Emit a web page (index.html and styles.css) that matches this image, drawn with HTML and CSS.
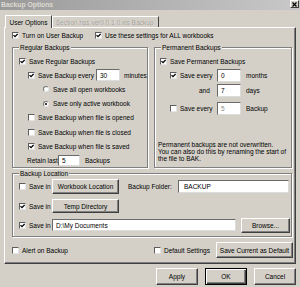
FILE: index.html
```html
<!DOCTYPE html>
<html>
<head>
<meta charset="utf-8">
<title>Backup Options</title>
<link rel="stylesheet" href="styles.css">
</head>
<body>
<div class="window">
  <div class="titlebar">
    <span class="title">Backup Options</span>
    <span class="close"><svg width="5" height="5" viewBox="0 0 5 5"><path d="M0.5 0.5 L4.5 4.5 M4.5 0.5 L0.5 4.5" stroke="#000" stroke-width="1.2"/></svg></span>
  </div>
  <div class="tabs">
    <div class="tab active">User Options</div>
    <div class="tab disabled">Section.hss.ver0.0.1.0.xls Backup</div>
  </div>
  <div class="panel">
    <div class="toprow">
      <div class="opt first"><span class="cb"><svg viewBox="0 0 5 5"><path d="M0.5 2.1 L2 3.6 L4.6 0.9"/></svg></span>Turn on User Backup</div>
      <div class="opt"><span class="cb"><svg viewBox="0 0 5 5"><path d="M0.5 2.1 L2 3.6 L4.6 0.9"/></svg></span>Use these settings for ALL workbooks</div>
    </div>
    <div class="groups">
      <div class="group regular">
        <span class="gtitle">Regular Backups</span>
        <div class="row"><span class="cb"><svg viewBox="0 0 5 5"><path d="M0.5 2.1 L2 3.6 L4.6 0.9"/></svg></span>Save Regular Backups</div>
        <div class="row i1"><span class="cb"><svg viewBox="0 0 5 5"><path d="M0.5 2.1 L2 3.6 L4.6 0.9"/></svg></span><span class="lbl every">Save Backup every</span><span class="input num">30</span><span class="unit">minutes</span></div>
        <div class="row i2"><span class="rb"></span>Save all open workbooks</div>
        <div class="row i2"><span class="rb on"></span>Save only active workbook</div>
        <div class="row i1"><span class="cb off"></span>Save Backup when file is opened</div>
        <div class="row i1"><span class="cb off"></span>Save Backup when file is closed</div>
        <div class="row i1"><span class="cb"><svg viewBox="0 0 5 5"><path d="M0.5 2.1 L2 3.6 L4.6 0.9"/></svg></span>Save Backup when file is saved</div>
        <div class="row retain"><span class="lbl retainlbl">Retain last</span><span class="input small">5</span><span class="unit">Backups</span></div>
      </div>
      <div class="group permanent">
        <span class="gtitle">Permanent Backups</span>
        <div class="prow"><span class="cb"><svg viewBox="0 0 5 5"><path d="M0.5 2.1 L2 3.6 L4.6 0.9"/></svg></span>Save Permanent Backups</div>
        <div class="prow p1"><span class="cb"><svg viewBox="0 0 5 5"><path d="M0.5 2.1 L2 3.6 L4.6 0.9"/></svg></span><span class="lbl plbl">Save every</span><span class="input pnum">0</span><span class="punit">months</span></div>
        <div class="prow p1 and"><span class="cbspace"></span><span class="lbl plbl andlbl">and</span><span class="input pnum">7</span><span class="punit">days</span></div>
        <div class="prow p1 last"><span class="cb off"></span><span class="lbl plbl">Save every</span><span class="input pnum dis">5</span><span class="punit">Backup</span></div>
        <p class="note">Permanent backups are not overwritten.<br>You can also do this by renaming the start of<br>the file to BAK.</p>
      </div>
    </div>
    <div class="group location">
      <span class="gtitle">Backup Location</span>
      <div class="lrow r1">
        <span class="cb off"></span><span class="lbl savein">Save in</span>
        <span class="btn wide">Workbook Location</span>
        <span class="lbl folderlbl">Backup Folder:</span>
        <span class="input folder">BACKUP</span>
      </div>
      <div class="lrow r2">
        <span class="cb"><svg viewBox="0 0 5 5"><path d="M0.5 2.1 L2 3.6 L4.6 0.9"/></svg></span><span class="lbl savein">Save in</span>
        <span class="btn wide">Temp Directory</span>
      </div>
      <div class="lrow r3">
        <span class="cb"><svg viewBox="0 0 5 5"><path d="M0.5 2.1 L2 3.6 L4.6 0.9"/></svg></span><span class="lbl savein">Save in</span>
        <span class="input path">D:\My Documents</span>
        <span class="btn browse">Browse...</span>
      </div>
    </div>
    <div class="bottomrow">
      <div class="opt alert"><span class="cb off"></span>Alert on Backup</div>
      <div class="opt defaults"><span class="cb off"></span>Default Settings</div>
      <span class="btn savedefault">Save Current as Default</span>
    </div>
  </div>
  <div class="actions">
    <span class="btn action">Apply</span>
    <span class="btn action default">OK</span>
    <span class="btn action">Cancel</span>
  </div>
</div>
</body>
</html>
```

FILE: styles.css
```css
* { box-sizing: border-box; margin: 0; padding: 0; }
html, body { width: 300px; height: 287px; overflow: hidden; }
body {
  background: #d4d0c8;
  font-family: "Liberation Sans", Arial, sans-serif;
  font-size: 6.5px;
  color: #000;
}
.window {
  width: 300px;
  height: 287px;
  display: flex;
  flex-direction: column;
  background: #d4d0c8;
}
.titlebar {
  height: 10px;
  display: flex;
  align-items: flex-start;
  justify-content: space-between;
  padding: 0 1px 0 1px;
  background: linear-gradient(to right, #9a9a9a, #c8c8c8);
}
.title {
  font-weight: bold;
  color: #dedad2;
  font-size: 6.8px;
  line-height: 10px;
}
.close {
  width: 9px;
  height: 8px;
  background: #d4d0c8;
  border-top: 1px solid #fff;
  border-left: 1px solid #fff;
  border-right: 1px solid #404040;
  border-bottom: 1px solid #404040;
  display: flex;
  align-items: center;
  justify-content: center;
}
.close svg { display: block; }

/* tabs */
.tabs {
  display: flex;
  align-items: flex-end;
  height: 12px;
  margin-top: 5px;
  padding-left: 5px;
  position: relative;
  z-index: 1;
}
.tab {
  height: 11px;
  display: flex;
  align-items: center;
  padding-left: 3px;
  border-top: 1px solid #fff;
  border-left: 1px solid #fff;
  border-right: 1px solid #404040;
  background: #d4d0c8;
  white-space: nowrap;
}
.tab.active {
  height: 13px;
  width: 47px;
  margin-bottom: -1px;
  justify-content: center;
  padding-left: 0;
}
.tab.disabled {
  width: 107px;
  color: #9c9890;
  text-shadow: 0.4px 0.4px 0 #f4f4f4;
}

/* panel */
.panel {
  margin-left: 4px;
  width: 292px;
  height: 237px;
  border-top: 1px solid #fff;
  border-left: 1px solid #fff;
  border-right: 1px solid #404040;
  border-bottom: 1px solid #404040;
  box-shadow: inset -1px -1px 0 #808080;
  padding: 3px 0 0 7px;
  display: flex;
  flex-direction: column;
}

.opt { display: flex; align-items: center; white-space: nowrap; }
.toprow { display: flex; align-items: center; height: 9px; }
.toprow .first { width: 83px; }

/* checkbox / radio */
.cb {
  flex: none;
  width: 7px;
  height: 7px;
  margin-right: 3px;
  background: #fff;
  border-top: 1px solid #5e5e5e;
  border-left: 1px solid #5e5e5e;
  border-right: 1px solid #e4e4e4;
  border-bottom: 1px solid #e4e4e4;
  display: flex;
}
.cb svg {
  width: 5px;
  height: 5px;
  display: block;
  fill: none;
  stroke: #000;
  stroke-width: 1.3;
}
.cbspace { flex: none; width: 7px; margin-right: 3px; }
.rb {
  flex: none;
  width: 6px;
  height: 6px;
  margin-right: 4px;
  border-radius: 50%;
  background: #fff;
  border: 1px solid;
  border-color: #7a7a7a #e8e8e8 #e8e8e8 #7a7a7a;
  display: flex;
  align-items: center;
  justify-content: center;
}
.rb.on::after {
  content: "";
  width: 2px;
  height: 2px;
  border-radius: 50%;
  background: #000;
}

/* inputs */
.input {
  flex: none;
  display: flex;
  align-items: center;
  height: 12px;
  padding-left: 3px;
  background: #fff;
  border-top: 1px solid #6a6a6a;
  border-left: 1px solid #6a6a6a;
  border-right: 1px solid #dcdcdc;
  border-bottom: 1px solid #dcdcdc;
  white-space: nowrap;
}
.input.dis { color: #8a8a8a; }

/* buttons */
.btn {
  flex: none;
  display: flex;
  align-items: center;
  justify-content: center;
  background: #d4d0c8;
  border-top: 1px solid #fff;
  border-left: 1px solid #fff;
  border-right: 1px solid #404040;
  border-bottom: 1px solid #404040;
  box-shadow: inset -1px -1px 0 #808080;
  white-space: nowrap;
}

/* groups */
.groups {
  display: flex;
  gap: 6px;
  margin-top: 7px;
  height: 121px;
}
.group {
  position: relative;
  border: 1px solid #808080;
  box-shadow: inset 1px 1px 0 #fff, 1px 1px 0 #fff;
}
.gtitle {
  position: absolute;
  top: -4px;
  left: 6px;
  padding: 0 1px;
  line-height: 7px;
  background: #d4d0c8;
  white-space: nowrap;
}
.regular { width: 136px; padding: 6px 0 0 6px; }
.permanent { width: 138px; padding: 6px 0 0 5px; }

.row { display: flex; align-items: center; height: 14.2px; white-space: nowrap; }
.row.i1 { margin-left: 9px; }
.row.i2 { margin-left: 24px; }
.row.retain { margin-left: 8px; }
.lbl { flex: none; white-space: nowrap; }
.every { width: 58px; }
.num { width: 24px; }
.unit { margin-left: 4px; }
.retainlbl { width: 31px; }
.small { width: 22px; height: 11px; }
.retain .unit { margin-left: 5px; }

.prow { display: flex; align-items: center; height: 14px; white-space: nowrap; }
.prow.p1 { margin-left: 10px; }
.prow.and { margin-top: 1px; }
.prow.last { margin-top: 4px; }
.plbl { width: 37px; }
.andlbl { padding-left: 19px; }
.pnum { width: 24px; height: 13px; }
.punit { margin-left: 5px; }
.note {
  margin-top: 26px;
  margin-left: -2px;
  line-height: 7.2px;
  white-space: nowrap;
}

.location {
  margin-top: 5px;
  width: 280px;
  height: 64px;
  padding: 5px 0 0 6px;
}
.lrow { display: flex; align-items: center; white-space: nowrap; }
.lrow.r1 { height: 15px; }
.lrow.r2 { height: 14px; margin-top: 5px; }
.lrow.r3 { height: 15px; margin-top: 4.5px; }
.savein { width: 23px; }
.wide { width: 67px; height: 100%; }
.folderlbl { margin-left: 9px; width: 50px; }
.folder { width: 111px; height: 13px; padding-left: 5px; }
.path { width: 184px; height: 12px; }
.browse { width: 49px; height: 15px; margin-left: 5px; }

.bottomrow {
  display: flex;
  align-items: center;
  height: 16px;
  margin-top: 5px;
}
.alert { width: 142px; }
.defaults { width: 62px; }
.savedefault { width: 77px; height: 16px; }

.actions {
  display: flex;
  justify-content: flex-end;
  gap: 7px;
  margin-top: 4px;
  padding-right: 4px;
  height: 17px;
}
.action { width: 42px; height: 17px; }
.action.default {
  border: 1px solid #000;
  box-shadow: inset 1px 1px 0 #fff, inset -1px -1px 0 #404040, inset -2px -2px 0 #808080;
}
```
